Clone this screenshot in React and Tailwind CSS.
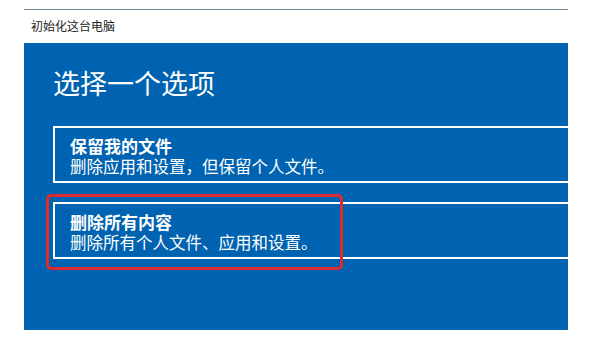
export default function App() {
  const font = { fontFamily: '"Noto Sans CJK SC", "Noto Sans", sans-serif' };
  return (
    <div className="w-[596px] h-[350px] bg-white pl-[24px] pt-[9px]" style={font}>
      <div className="w-[544px]">
        <div className="h-[1px] bg-[#6e808c]" />
        <div className="h-[33px] pl-[7px] pt-[8px] text-[12px] leading-[16px] text-[#222]">初始化这台电脑</div>
        <div className="h-[287px] bg-[#0063b1] overflow-hidden pl-[29px] pt-[22px]">
          <div className="text-[27px] leading-[36px] text-white font-normal">选择一个选项</div>
          <div className="mt-[25px] w-[600px] h-[57px] border-2 border-white pl-[15px] pt-[7px] text-white">
            <div className="text-[17px] leading-[21px] font-bold">保留我的文件</div>
            <div className="text-[16.5px] leading-[21px]">删除应用和设置，但保留个人文件。</div>
          </div>
          <div className="relative mt-[19px]">
            <div className="w-[600px] h-[57px] border-2 border-white pl-[15px] pt-[7px] text-white">
              <div className="text-[17px] leading-[21px] font-bold">删除所有内容</div>
              <div className="text-[16.5px] leading-[21px]">删除所有个人文件、应用和设置。</div>
            </div>
            <div className="absolute left-[-7px] top-[-8px] w-[297px] h-[76px] border-[3px] border-[#dc2a2e] rounded-[5px]" />
          </div>
        </div>
      </div>
    </div>
  );
}
